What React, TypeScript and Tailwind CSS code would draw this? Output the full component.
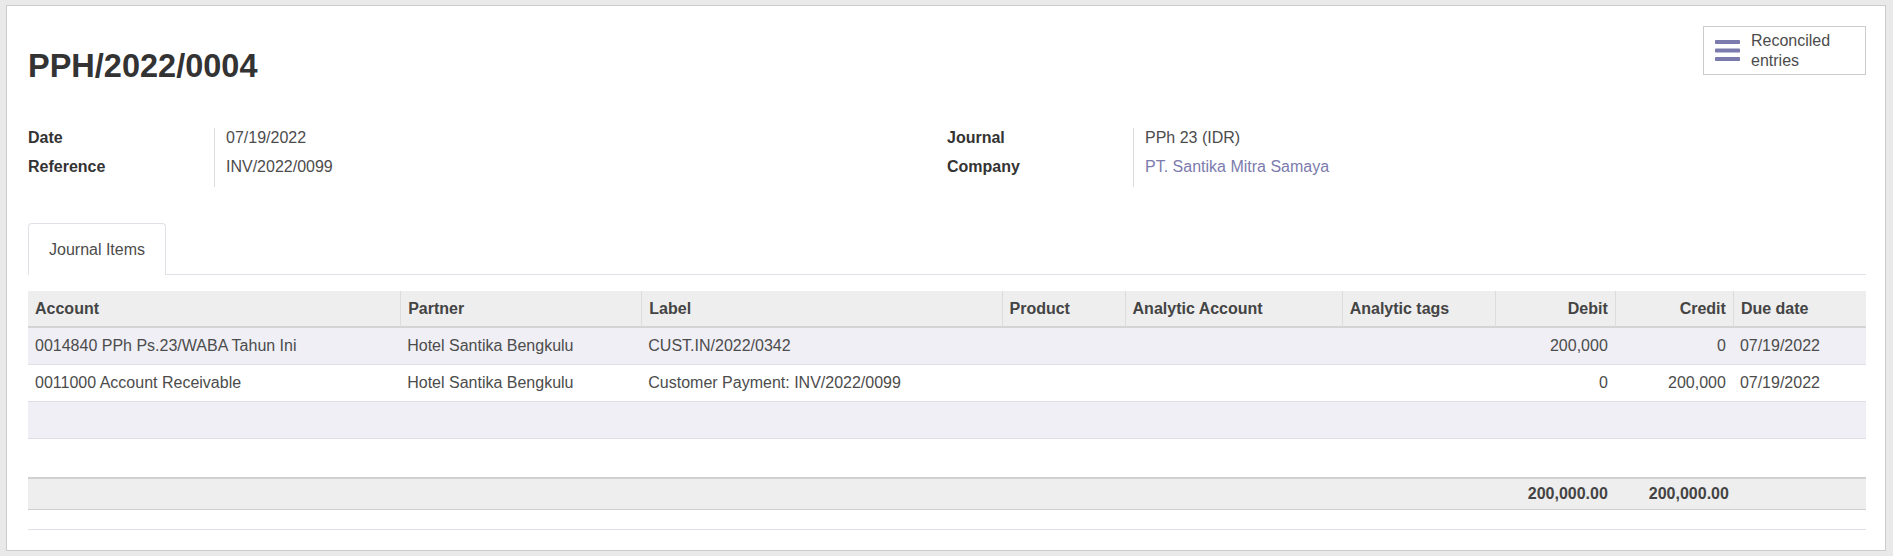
import React from "react";

const columns = [
  { label: "Account", width: 372, align: "left" },
  { label: "Partner", width: 241, align: "left" },
  { label: "Label", width: 360, align: "left" },
  { label: "Product", width: 123, align: "left" },
  { label: "Analytic Account", width: 217, align: "left" },
  { label: "Analytic tags", width: 153, align: "left" },
  { label: "Debit", width: 120, align: "right" },
  { label: "Credit", width: 118, align: "right" },
  { label: "Due date", width: 133, align: "left" },
];

const lines = [
  ["0014840 PPh Ps.23/WABA Tahun Ini", "Hotel Santika Bengkulu", "CUST.IN/2022/0342", "", "", "", "200,000", "0", "07/19/2022"],
  ["0011000 Account Receivable", "Hotel Santika Bengkulu", "Customer Payment: INV/2022/0099", "", "", "", "0", "200,000", "07/19/2022"],
];

function FieldGroup({ rows }: { rows: { label: string; value: string; link?: boolean }[] }) {
  return (
    <div className="flex">
      <div className="w-[186px] flex flex-col">
        {rows.map((r) => (
          <div key={r.label} className="h-[29px] leading-[20px] font-bold text-[#333]">
            {r.label}
          </div>
        ))}
      </div>
      <div className="flex flex-col border-l border-[#dcdcdc] pl-[11px] h-[59px]">
        {rows.map((r) => (
          <div
            key={r.label}
            className={r.link ? "h-[29px] leading-[20px] text-[#7c7bad]" : "h-[29px] leading-[20px] text-[#4c4c4c]"}
          >
            {r.value}
          </div>
        ))}
      </div>
    </div>
  );
}

export default function App() {
  return (
    <div className="min-h-[556px] bg-[#e9e9e9] pl-[6px] pr-[7px] pt-[5px] pb-[5px] font-['Liberation_Sans',Arial,sans-serif] text-[16px]">
      <div className="bg-white border border-[#cccccc] pl-[21px] pr-[19px] pt-[20px] pb-[20px]">
        {/* header */}
        <div className="flex justify-between items-start">
          <h1 className="mt-[20px] text-[32.5px] leading-[40px] font-bold text-[#333]">PPH/2022/0004</h1>
          <button className="w-[163px] h-[49px] border border-[#cccccc] bg-white flex items-center pl-[11px] gap-[11px] text-left">
            <svg width="25" height="21" viewBox="0 0 25 21" className="shrink-0">
              <rect x="0" y="0" width="25" height="4" rx="0.8" fill="#7c7bad" />
              <rect x="0" y="8.5" width="25" height="4" rx="0.8" fill="#7c7bad" />
              <rect x="0" y="17" width="25" height="4" rx="0.8" fill="#7c7bad" />
            </svg>
            <span className="leading-[20px] text-[#4c4c4c]">
              Reconciled
              <br />
              entries
            </span>
          </button>
        </div>

        {/* fields */}
        <div className="grid grid-cols-2 mt-[42px]">
          <FieldGroup
            rows={[
              { label: "Date", value: "07/19/2022" },
              { label: "Reference", value: "INV/2022/0099" },
            ]}
          />
          <FieldGroup
            rows={[
              { label: "Journal", value: "PPh 23 (IDR)" },
              { label: "Company", value: "PT. Santika Mitra Samaya", link: true },
            ]}
          />
        </div>

        {/* tabs */}
        <div className="mt-[36px] flex border-b border-[#dee2e6]">
          <div className="h-[52px] -mb-px px-[20px] flex items-center bg-white border border-b-0 border-[#dee2e6] rounded-t-[4px] text-[#4c4c4c]">
            Journal Items
          </div>
        </div>

        {/* journal items table */}
        <table className="mt-[16px] w-full table-fixed border-separate border-spacing-0 text-[#4c4c4c]">
          <colgroup>
            {columns.map((c) => (
              <col key={c.label} style={{ width: c.width }} />
            ))}
          </colgroup>
          <thead>
            <tr>
              {columns.map((c, i) => (
                <th
                  key={c.label}
                  className={
                    (c.align === "right" ? "text-right " : "text-left ") +
                    (i > 0 ? "border-l border-l-[#dcdcdc] " : "") +
                    "h-[37px] px-[7px] bg-[#eeeeee] font-bold text-[#444] border-b-2 border-b-[#d4d4d4] align-middle"
                  }
                >
                  {c.label}
                </th>
              ))}
            </tr>
          </thead>
          <tbody>
            {lines.map((row, ri) => (
              <tr key={ri} className={ri % 2 === 0 ? "bg-[#efeff5]" : "bg-white"}>
                {row.map((v, ci) => (
                  <td
                    key={ci}
                    className={
                      (columns[ci].align === "right" ? "text-right " : "text-left ") +
                      "h-[37px] px-[7px] border-b border-[#dee2e6] whitespace-nowrap"
                    }
                  >
                    {v}
                  </td>
                ))}
              </tr>
            ))}
            <tr className="bg-[#efeff5]">
              <td colSpan={9} className="h-[37px] border-b border-[#dee2e6]"></td>
            </tr>
            <tr>
              <td colSpan={9} className="h-[38px]"></td>
            </tr>
          </tbody>
          <tfoot>
            <tr className="bg-[#eeeeee]">
              {columns.map((c, ci) => (
                <td
                  key={c.label}
                  className={
                    (ci === 7 ? "pr-[4px] " : "pr-[7px] ") +
                    "h-[33px] pl-[7px] text-right font-bold text-[#444] border-t-2 border-t-[#d0d0d0] border-b border-b-[#d0d0d0]"
                  }
                >
                  {ci === 6 || ci === 7 ? "200,000.00" : ""}
                </td>
              ))}
            </tr>
          </tfoot>
        </table>

        <div className="mt-[19px] border-t border-[#dee2e6]"></div>
      </div>
    </div>
  );
}
